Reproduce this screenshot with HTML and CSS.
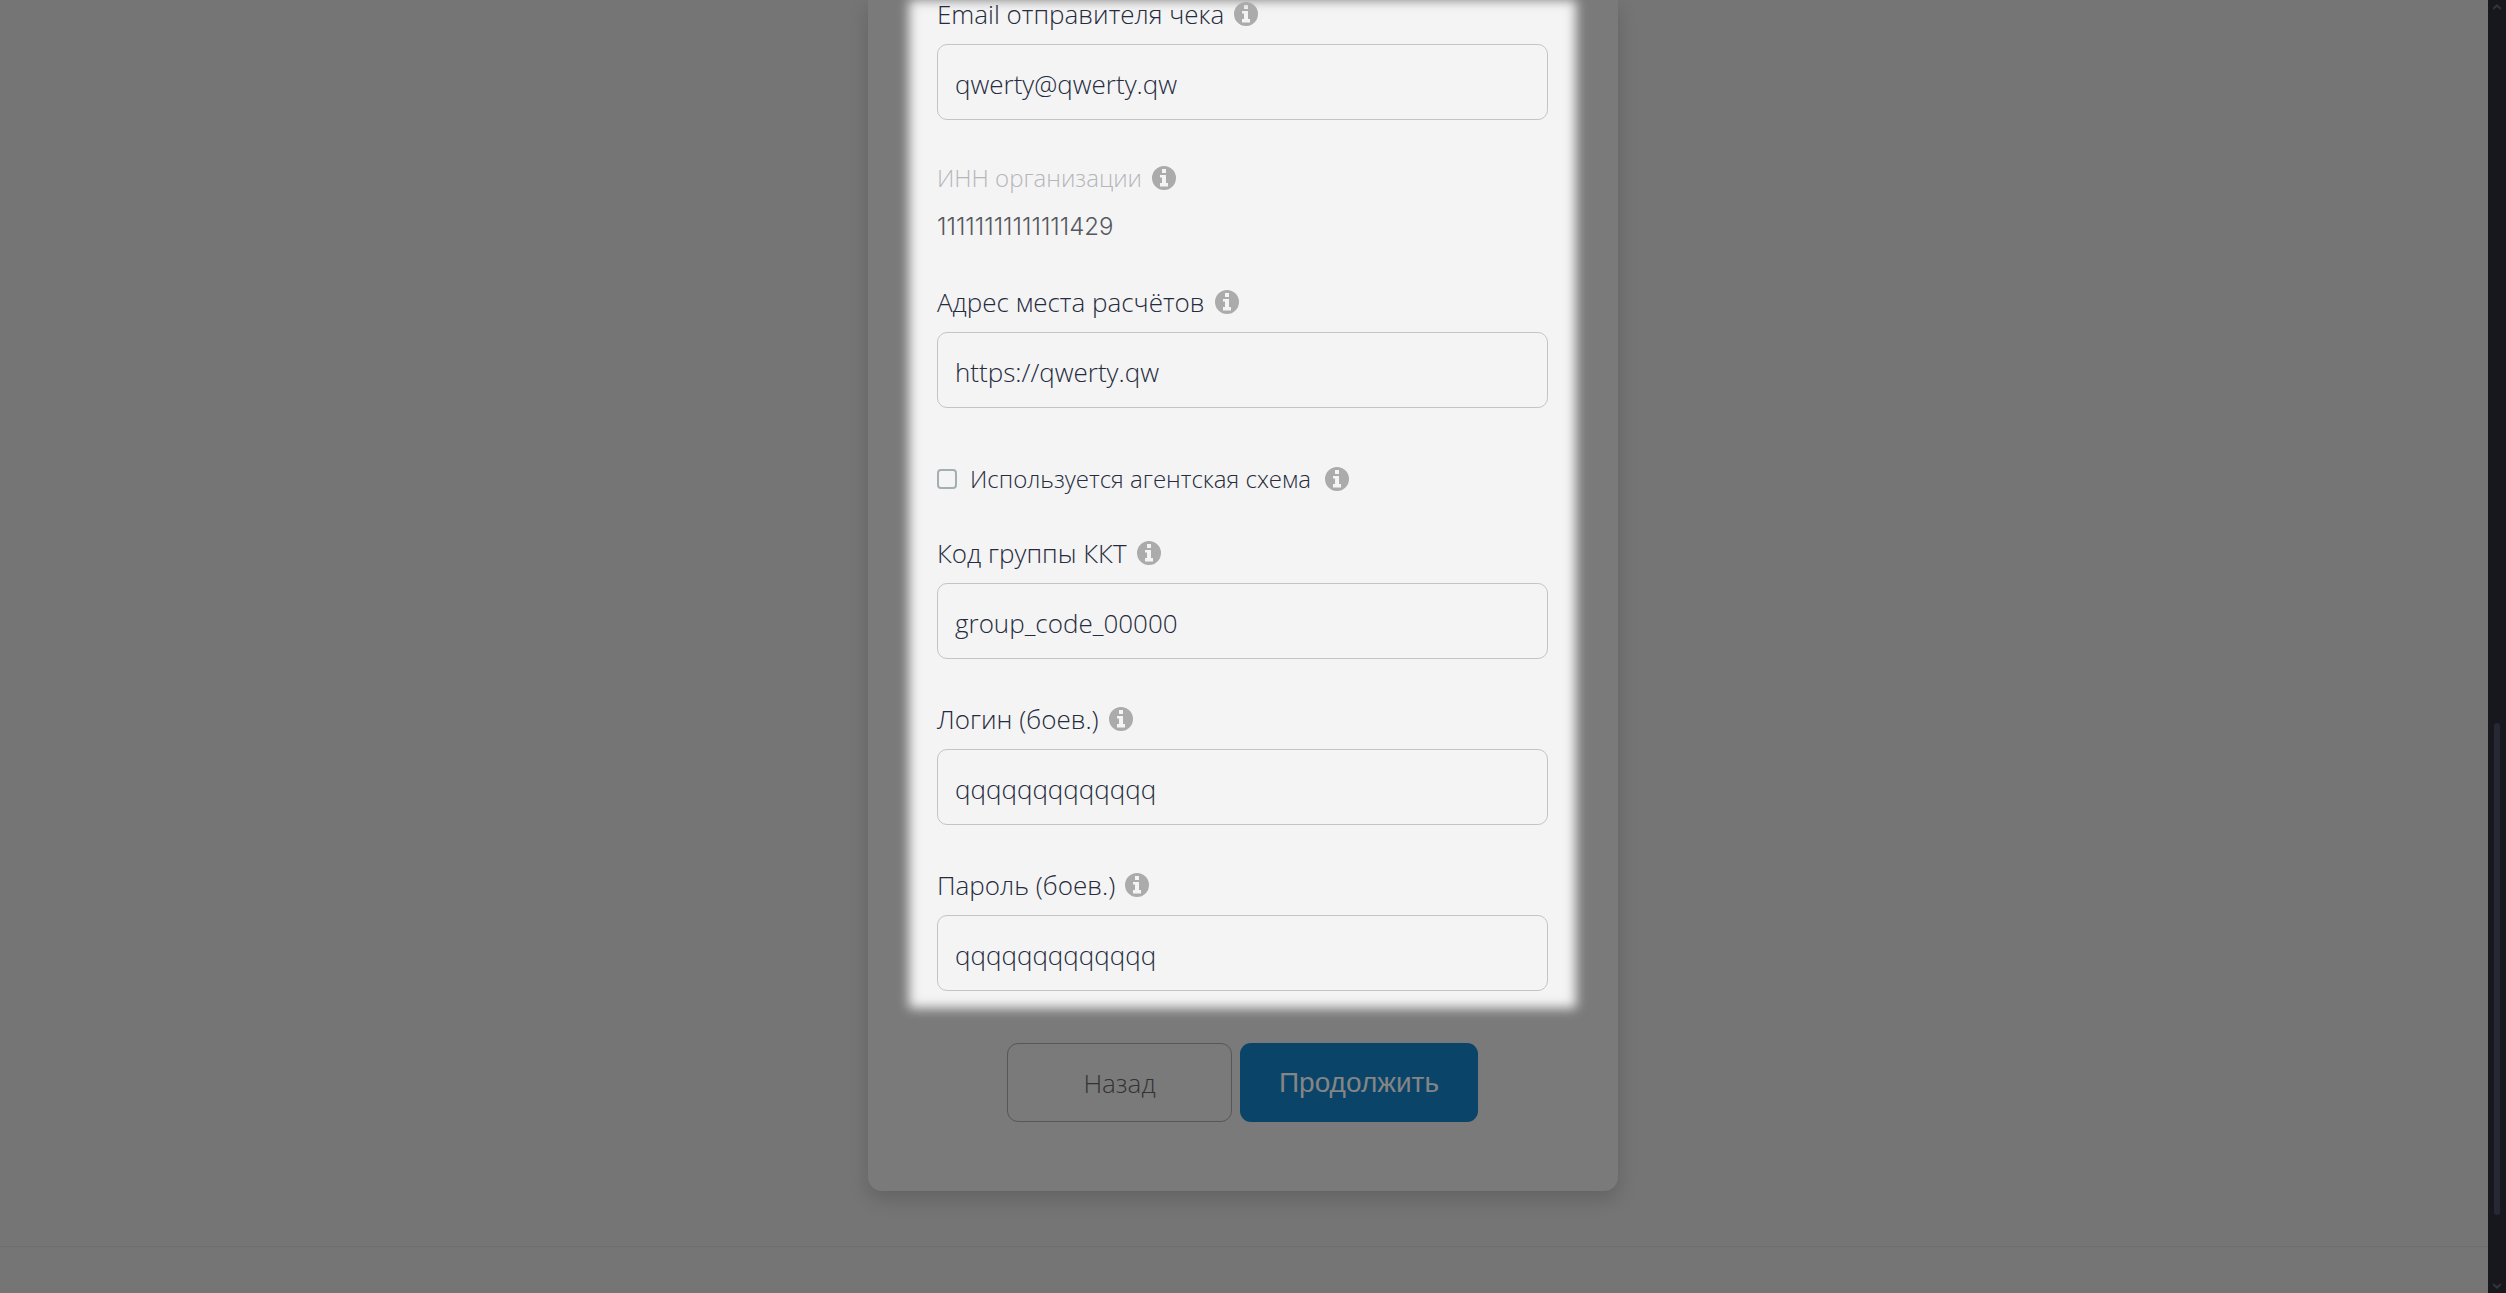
FILE: index.html
```
<!DOCTYPE html>
<html lang="ru">
<head>
    <meta charset="UTF-8">
    <meta name="viewport" content="width=device-width, initial-scale=1.0">
    <title>Настройки чека</title>
    <link rel="stylesheet" href="styles.css">
</head>
<body>

    <!-- Info icon, reused by every label -->
    <svg class="icon-defs" aria-hidden="true">
        <symbol id="info" viewBox="0 0 24 24">
            <path fill-rule="evenodd" d="M12 0a12 12 0 1 1 0 24a12 12 0 1 1 0-24zM10 3v4h4V3zM8 9v2.500h2V17H8v3.500h8V17h-2V9z"/>
        </symbol>
    </svg>

    <div class="page">
        <form class="card">
            <div class="spotlight">
                <div class="field">
                    <label class="label" for="email">Email отправителя чека <svg class="info"><use href="#info"/></svg></label>
                    <input class="input" type="text" id="email" value="qwerty@qwerty.qw">
                </div>

                <div class="field readonly">
                    <div class="label">ИНН организации <svg class="info"><use href="#info"/></svg></div>
                    <div class="value">11111111111111429</div>
                </div>

                <div class="field">
                    <label class="label" for="address">Адрес места расчётов <svg class="info"><use href="#info"/></svg></label>
                    <input class="input" type="text" id="address" value="https://qwerty.qw">
                </div>

                <div class="field check">
                    <input type="checkbox" id="agent">
                    <label class="label" for="agent">Используется агентская схема <svg class="info"><use href="#info"/></svg></label>
                </div>

                <div class="field">
                    <label class="label" for="group">Код группы ККТ <svg class="info"><use href="#info"/></svg></label>
                    <input class="input" type="text" id="group" value="group_code_00000">
                </div>

                <div class="field">
                    <label class="label" for="login">Логин (боев.) <svg class="info"><use href="#info"/></svg></label>
                    <input class="input" type="text" id="login" value="qqqqqqqqqqqqq">
                </div>

                <div class="field">
                    <label class="label" for="password">Пароль (боев.) <svg class="info"><use href="#info"/></svg></label>
                    <input class="input" type="text" id="password" value="qqqqqqqqqqqqq">
                </div>
            </div>

            <div class="buttons">
                <button type="button" class="btn back">Назад</button>
                <button type="submit" class="btn next">Продолжить</button>
            </div>
        </form>

        <footer class="footer"></footer>
    </div>

    <div class="scrollbar" aria-hidden="true">
        <svg class="arrow" viewBox="0 0 8 6"><path d="M0 6V3.500L4 0l4 3.500V6L4 3z"/></svg>
        <div class="track"><div class="thumb"></div></div>
        <svg class="arrow" viewBox="0 0 8 6"><path d="M0 0v2.500L4 6l4-3.500V0L4 3z"/></svg>
    </div>

</body>
</html>
```
FILE: styles.css
```
* {
    box-sizing: border-box;
}

body {
    margin: 0;
    display: flex;
    height: 100vh;
    overflow: hidden;
    background: #757575;
    color: #262b3d;
    font-family: "Open Sans", "Noto Sans", sans-serif;
    font-weight: 300;
    font-size: 26px;
}

.icon-defs {
    position: absolute;
    width: 0;
    height: 0;
}

.page {
    flex: 1;
    display: flex;
    flex-direction: column;
    align-items: center;
    padding-right: 2px;
}

.card {
    width: 100%;
    max-width: 750px;
    padding: 0 42px 69px 41px;
    background: #7a7a7a;
    border-radius: 0 0 14px 14px;
    box-shadow: 0 8px 20px rgba(0, 0, 0, 0.16);
}

/* Highlighted part of the form, with soft edges */
.spotlight {
    position: relative;
    display: flex;
    flex-direction: column;
    gap: 46px;
    padding: 0 28px 17px;
}

.spotlight::before {
    content: "";
    position: absolute;
    inset: 0;
    background: #f4f4f4;
    filter: blur(6px);
}

.field {
    position: relative;
    display: flex;
    flex-direction: column;
    gap: 16px;
}

.label {
    display: flex;
    align-items: center;
    gap: 10px;
    line-height: 28px;
}

.info {
    width: 24px;
    height: 24px;
    fill: #ababab;
}

.input {
    width: 100%;
    height: 76px;
    padding: 4px 17px 0;
    border: 1px solid #c4c4c4;
    border-radius: 10px;
    background: transparent;
    color: inherit;
    font: inherit;
}

.readonly {
    gap: 20px;
    margin: -2px 0 2px;
    font-size: 24px;
}

.readonly .label {
    color: #b4b6bb;
}

.value {
    color: #55585f;
    font-family: Inter, sans-serif;
    line-height: 30px;
    margin-bottom: -2px;
}

.check {
    flex-direction: row;
    align-items: center;
    gap: 13px;
    margin-top: 11px;
    font-size: 24px;
}

.check .label {
    gap: 14px;
}

.check input {
    appearance: none;
    width: 20px;
    height: 20px;
    margin: 0;
    border: 2px solid #a3b0b2;
    border-radius: 4px;
}

.buttons {
    display: flex;
    justify-content: center;
    gap: 8px;
    margin-top: 35px;
}

.btn {
    height: 79px;
    border-radius: 11px;
    font-size: 28px;
}

.back {
    width: 225px;
    border: 1px solid #575757;
    background: transparent;
    color: #333333;
    font-family: inherit;
    font-size: 26px;
    font-weight: 300;
}

.next {
    width: 238px;
    border: none;
    background: #0a4469;
    color: #858585;
    font-family: "Liberation Sans", Arial, sans-serif;
}

.footer {
    flex: 1;
    align-self: stretch;
    margin: 55px -2px 0 0;
    border-top: 1px solid #6f6f6f;
}

.scrollbar {
    display: flex;
    flex-direction: column;
    align-items: center;
    gap: 4px;
    width: 18px;
    padding: 4px 0;
    background: #17181d;
}

.arrow {
    width: 8px;
    height: 6px;
    fill: #333438;
}

.track {
    flex: 1;
    display: flex;
    flex-direction: column;
    justify-content: flex-end;
    padding-bottom: 64px;
}

.thumb {
    width: 6px;
    height: 41%;
    border-radius: 3px;
    background: #262833;
}
```
